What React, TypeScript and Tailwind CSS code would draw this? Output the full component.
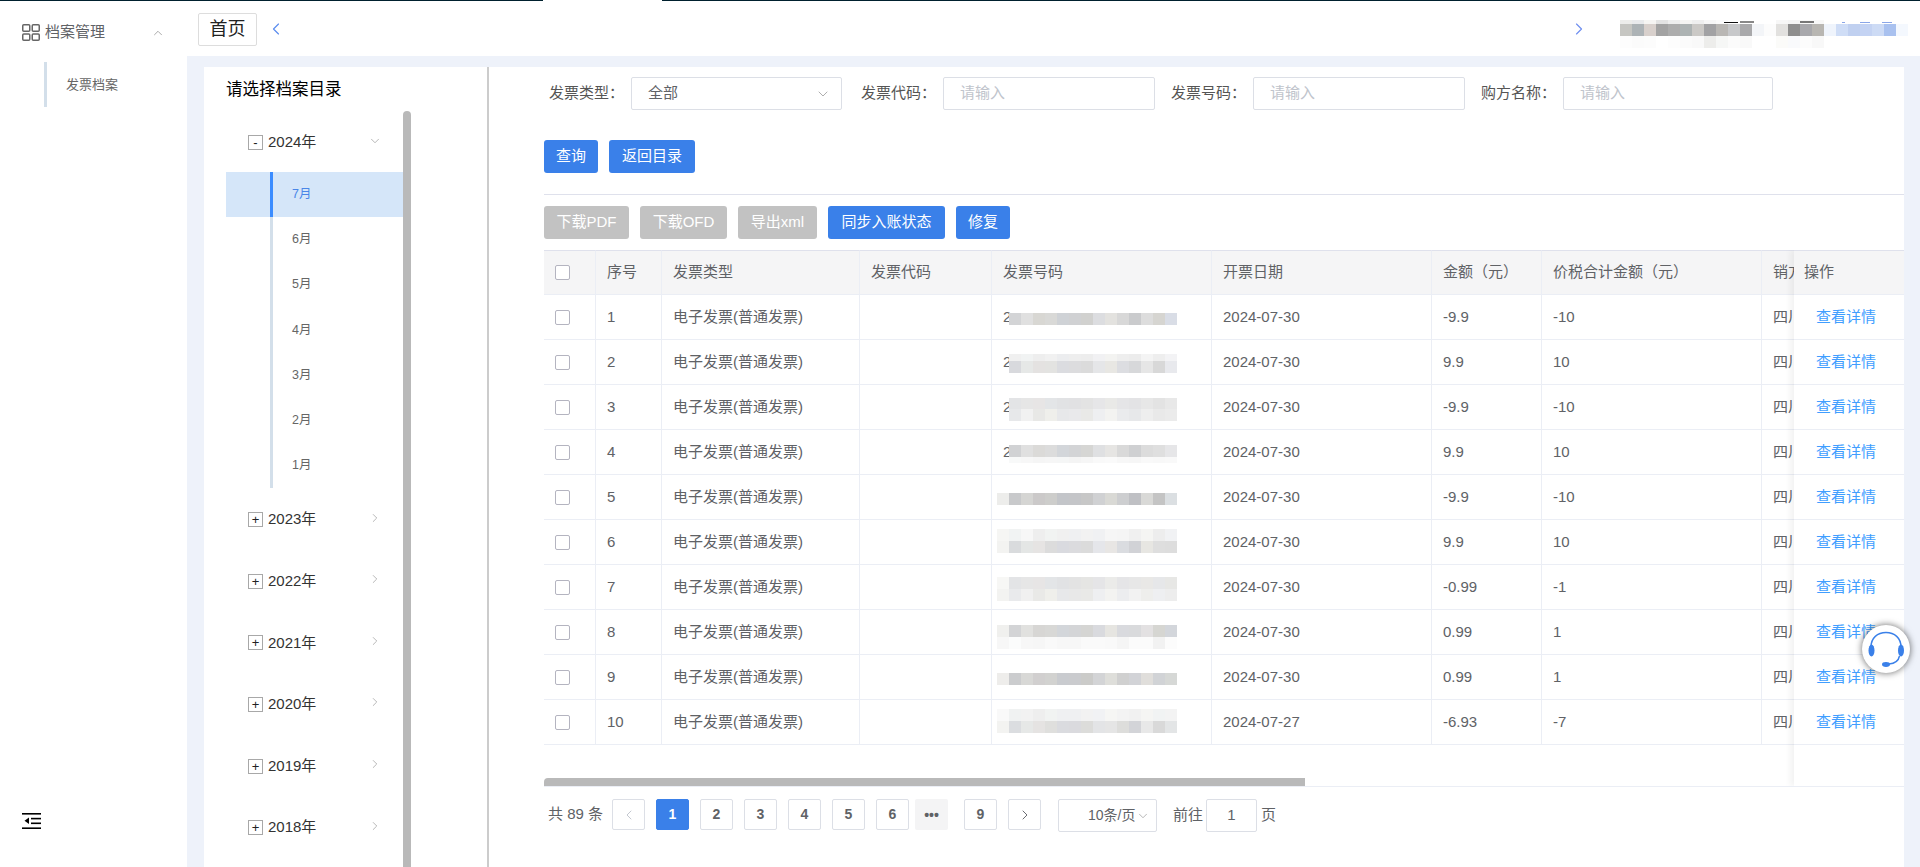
import type { ReactNode } from "react"
import { ChevronDown, ChevronLeft, ChevronRight, ChevronUp } from "lucide-react"

type MosaicRow = [number, string]

// 截图里被打码的区域: 每行 [高度, 颜色列表], 每格 12px 宽
function Mosaic({ rows, className, children }: { rows: MosaicRow[]; className?: string; children?: ReactNode }) {
  const cols = rows[0][1].split(" ").length
  const height = rows.reduce((sum, r) => sum + r[0], 0)
  let y = 0
  return (
    <svg width={cols * 12} height={height} className={className}>
      {rows.map(([h, colors], i) => {
        const top = y
        y += h
        return colors.split(" ").map((c, j) => <rect key={`${i}-${j}`} x={j * 12} y={top} width={12} height={h} fill={`#${c}`} />)
      })}
      {children}
    </svg>
  )
}

const invoiceMosaics: { left: number; top: number; hasDigit: boolean; rows: MosaicRow[] }[] = [
  { left: 17, top: 18, hasDigit: true, rows: [[12, "d3d4d6 e0e0e0 d8d7d3 d9d9d7 cfd2d6 d0d1d3 d1d1cf dcdde0 e3e2df d8d8d8 cacbcd dddddd d6d5d1 d9dde6"]] },
  {
    left: 17,
    top: 14,
    hasDigit: true,
    rows: [
      [7, "f0f0f0 f1f3f3 eeeeee f1f1f1 ecedef eeeeee ededed f1f1f3 f3f3f1 eeeeee ececec f4f4f4 eeeeee f3f3f5"],
      [12, "d8d9dd e6e8e7 e4e2e1 e3e3e1 dbdce0 dcdcde dbdbdb e5e6e8 e8e7e3 dcdde1 d7d8da e6e6e6 d8d8d8 e8e9ed"],
    ],
  },
  {
    left: 17,
    top: 13,
    hasDigit: true,
    rows: [
      [11, "e3e4e6 e6e6e6 e7e5e5 e3e5e7 e1e2e4 e1e1e3 e3e3e3 e6e6e8 e9e9e7 e5e5e7 e3e3e5 e7e7e7 e3e3e3 e8e8e8"],
      [12, "e7e8ea f1f1f1 e8e8e6 efefeb e7e8ea e9e9eb e9e9e7 eeeff1 f3f3f1 eaebed e7e8ea eeeeee e9e9e9 ebebeb"],
    ],
  },
  {
    left: 17,
    top: 15,
    hasDigit: true,
    rows: [
      [12, "d1d2d4 e0e0e0 dbdad8 dcdcdc d3d6da d3d4d6 d6d6d4 dfe0e2 e6e5e3 d9d9d9 cfd0d2 dcdcdc dfdfdf e6e6e8"],
      [6, "f8f9f9 f7f7f7 f5f5f5 f6f6f6 f5f6f6 f4f4f4 f6f6f6 f9f9f9 fafafa f7f7f7 f6f6f6 f9f9f9 f8f8f8 f9f9f9"],
    ],
  },
  { left: 5, top: 18, hasDigit: false, rows: [[12, "ededeb c8c9cb d5d5d3 cbc9c9 cdcdcb c3c5c9 c4c5c8 c7c7c7 d0d1d3 d9d9d5 cdced0 bfc0c4 d9d9d7 c4c4c4 dbdfe2"]] },
  {
    left: 5,
    top: 9,
    hasDigit: false,
    rows: [
      [12, "f6f6f4 f1f3f3 f7f7f7 eeeeee f1f3f2 f0f0f0 eff0f2 f2f2f2 f0f1f3 f6f6f6 f5f5f5 f0f0f0 f5f5f3 ededed f1f2f4"],
      [12, "f3f3f1 d9dbdd e4e6e5 e6e4e3 dcdcdc d9dadf dbdbde dbdbdb e5e6ea e8e6e4 dadce0 d1d2d6 e7e6e2 dedede dddddd"],
    ],
  },
  {
    left: 5,
    top: 12,
    hasDigit: false,
    rows: [
      [12, "f7f7f5 e3e4e6 e6e6e6 e7e5e5 e3e5e7 e1e2e4 e3e3e3 e5e5e3 e5e5e7 ebebe9 e5e5e7 e7e7e7 e9e8e6 e6e7e9 e7e7e5"],
      [12, "f3f3f1 e9eaec f0f0f0 e9e9e7 efefeb e7e8ea e8e8e8 e9e9e7 eeeff1 f3f3f1 ecedef f2f2f2 eeeeec eeeff1 ededed"],
    ],
  },
  {
    left: 5,
    top: 15,
    hasDigit: false,
    rows: [
      [12, "f0f0ee d3d4d6 e1e1df d7d6d4 d8d8d6 d3d6da d4d5d7 d5d5d3 d9dade e6e5e1 d9dade d9dadc e3e1e2 d6d6d2 d3d6db"],
      [12, "f7f7f7 fbfcfc f7f7f7 f6f6f6 f9f9f9 f7f7f7 f7f7f7 fafafa fafafa f9f9f9 f5f5f5 fbfbfb fbfbfb f2f2f2 fcfcfc"],
    ],
  },
  { left: 5, top: 18, hasDigit: false, rows: [[12, "eeedeb cbccce d8d8d6 d1cfcf d2d2d0 c9cbcf cacbce cbcbc9 d3d4d6 dededa d0d0d0 d2d3d7 e0dedb d1d3d6 d6d8d6"]] },
  {
    left: 5,
    top: 9,
    hasDigit: false,
    rows: [
      [12, "f9f9f9 f0f2f2 f2f2f2 eeeeee f1f3f2 eff0f2 eff0f2 f2f2f2 f1f2f4 f6f6f4 f3f3f3 f1f1f1 f5f5f3 f1f3f3 f3f3f3"],
      [12, "f3f3f1 dbdde0 e6e8e7 e5e3e2 dfdfdd dadbdf dadade dcdcda e3e4e6 e5e5e5 dddddb d3d4d8 e8e8e8 d9d9d9 e3e5e6"],
    ],
  },
]

const headerMosaic: MosaicRow[] = [
  [4, "ededeb e9eaec f6f5f3 e3e3e3 eeeeee f5f5f3 efefef f7f7f7 fbfbfb ffffff ffffff ffffff ffffff f7f7f7 f4f4f4 f8f8f8 f8f8f8 ffffff ffffff ffffff ffffff ffffff ffffff ffffff"],
  [12, "c6c6c2 adb3b6 d8d0cc a3a3a3 adadad adb3b3 cbc9c6 a2a2a4 b9b7b4 c7c8ca a9a9ab f3f5f8 fcfcfc e2e1df 8e8e8e a8a8ac b8b6b2 eff4fc cfddf6 c0d0f0 c4d3f3 cddbf5 a9c1ef f4f8fe"],
  [12, "fdfdfd fbfbfb fcfcfc ffffff fdfdfd fbfbfb f9f9f9 ededeb f6f7f6 fbfbfb f9f9f9 ffffff ffffff fbfbf9 f9fafc fcfcfc f8f8f8 ffffff ffffff ffffff ffffff ffffff ffffff ffffff"],
]

const months = ["7月", "6月", "5月", "4月", "3月", "2月", "1月"]
const years = ["2023年", "2022年", "2021年", "2020年", "2019年", "2018年"]

const rows = [
  { no: 1, date: "2024-07-30", amount: "-9.9", total: "-10" },
  { no: 2, date: "2024-07-30", amount: "9.9", total: "10" },
  { no: 3, date: "2024-07-30", amount: "-9.9", total: "-10" },
  { no: 4, date: "2024-07-30", amount: "9.9", total: "10" },
  { no: 5, date: "2024-07-30", amount: "-9.9", total: "-10" },
  { no: 6, date: "2024-07-30", amount: "9.9", total: "10" },
  { no: 7, date: "2024-07-30", amount: "-0.99", total: "-1" },
  { no: 8, date: "2024-07-30", amount: "0.99", total: "1" },
  { no: 9, date: "2024-07-30", amount: "0.99", total: "1" },
  { no: 10, date: "2024-07-27", amount: "-6.93", total: "-7" },
]

function Sidebar() {
  return (
    <aside className="relative w-[187px] shrink-0 bg-white">
      <div className="flex h-[55px] items-center pl-[22px] pt-[8px] text-[15px] text-[#606266]">
        <svg width="18" height="17" viewBox="0 0 18 17" fill="none" stroke="#666" strokeWidth="1.5">
          <rect x="0.75" y="0.75" width="7" height="6.5" rx="1" />
          <rect x="10.25" y="0.75" width="7" height="6.5" rx="1" />
          <rect x="0.75" y="10" width="7" height="6.25" rx="1" />
          <rect x="10.25" y="10" width="7" height="6.25" rx="1" />
        </svg>
        <span className="ml-[5px]">档案管理</span>
        <ChevronUp size={14} strokeWidth={1.4} className="ml-[46px] text-[#999]" />
      </div>
      <div className="ml-[44px] mt-[6px] flex h-[45px] items-center border-l-[3px] border-[#d3dfea] pl-[19px] text-[13px] text-[#666]">发票档案</div>
      <svg width="19" height="16" viewBox="0 0 19 16" className="absolute bottom-[38px] left-[22px]">
        <rect x="0" y="0" width="19" height="1.6" />
        <rect x="9" y="4.8" width="10" height="1.6" />
        <rect x="9" y="9.5" width="10" height="1.6" />
        <rect x="0" y="14.4" width="19" height="1.6" />
        <path d="M7 4.5v6.5L2.5 7.8z" />
      </svg>
    </aside>
  )
}

function Header() {
  return (
    <header className="flex h-[55px] shrink-0 items-center bg-white pl-[11px] pr-[12px]">
      <div className="mt-[1px] flex h-[33px] w-[59px] items-center justify-center rounded-[2px] border border-[#ddd] text-[18px] text-[#222]">首页</div>
      <ChevronLeft size={20} strokeWidth={1.4} className="ml-[9px] mt-[1px] text-[#5b8def]" />
      <ChevronRight size={20} strokeWidth={1.4} className="ml-auto mt-[1px] text-[#6f8ff0]" />
      <Mosaic rows={headerMosaic} className="ml-[31px] mt-[11px]">
        <rect x="104" y="2" width="14" height="1" fill="#111" />
        <rect x="120" y="1" width="14" height="2" fill="#888" />
        <rect x="180" y="1" width="14" height="2" fill="#777" />
        <rect x="222" y="2" width="3" height="1" fill="#8aa6e8" />
        <rect x="240" y="2" width="10" height="1" fill="#8aa6e8" />
        <rect x="262" y="2" width="10" height="1" fill="#8aa6e8" />
      </Mosaic>
    </header>
  )
}

function TreeYear({ label, open }: { label: string; open?: boolean }) {
  return (
    <div className={`flex items-center pl-[22px] pr-[21px] ${open ? "h-[61px] pt-[2px]" : "h-[61.6px]"}`}>
      <span className="flex h-[15px] w-[15px] items-center justify-center border border-[#a8a8a8] text-[13px] leading-none text-[#222]">{open ? "-" : "+"}</span>
      <span className="ml-[5px] text-[15px] text-[#333]">{label}</span>
      {open ? (
        <ChevronDown size={14} strokeWidth={1.2} className="ml-auto -mt-[4px] text-[#999]" />
      ) : (
        <ChevronRight size={14} strokeWidth={1.2} className="ml-auto -mt-[4px] text-[#999]" />
      )}
    </div>
  )
}

function TreePanel() {
  return (
    <section className="flex w-[285px] shrink-0 flex-col overflow-hidden border-r-2 border-[#ccc] bg-white pl-[22px]">
      <h2 className="flex h-[44px] shrink-0 items-center text-[16.5px] text-black">请选择档案目录</h2>
      <div className="flex flex-1 overflow-hidden">
        <div className="w-[177px] shrink-0">
          <TreeYear label="2024年" open />
          {months.map((m, i) => (
            <div key={m} className={`h-[45.14px] pl-[44px] ${i === 0 ? "bg-[#d5e6f9]" : ""}`}>
              <div className={`flex h-full items-center border-l-[3px] pl-[19px] text-[12.5px] ${i === 0 ? "border-[#3b8cff] text-[#4a86e8]" : "border-[#d3dfea] text-[#666]"}`}>{m}</div>
            </div>
          ))}
          <div className="h-px" />
          {years.map((y) => (
            <TreeYear key={y} label={y} />
          ))}
        </div>
        <div className="h-full w-[8px] rounded-t-[4px] bg-[#b9b9b9]" />
      </div>
    </section>
  )
}

function FilterField({ label, width, gap, placeholder }: { label: string; width: number; gap: string; placeholder: string }) {
  return (
    <>
      <span className={`${gap} w-[82px] shrink-0 text-[15px] text-[#555]`}>{label}</span>
      <div className={`flex h-[33px] items-center rounded-[2px] border border-[#dcdfe6] pl-[16px] text-[15px] text-[#c0c4cc] ${width === 212 ? "w-[212px]" : "w-[210px]"}`}>{placeholder}</div>
    </>
  )
}

function Btn({ label, width, gray }: { label: string; width: string; gray?: boolean }) {
  return <button className={`flex h-[33px] items-center justify-center rounded-[3px] text-[15px] text-white ${width} ${gray ? "bg-[#c2c2c2]" : "bg-[#3a80e9]"}`}>{label}</button>
}

function Checkbox() {
  return <span className="block h-[15px] w-[15px] rounded-[2px] border border-[#b4b4c0] bg-white" />
}

const th = "border-r border-[#ebeef5] px-[11px] text-left font-normal"
const td = "border-b border-r border-[#ebeef5] px-[11px]"

const mosaicTop: Record<number, string> = {
  9: "top-[9px]",
  12: "top-[12px]",
  13: "top-[13px]",
  14: "top-[14px]",
  15: "top-[15px]",
  18: "top-[18px]",
}

function InvoiceTable() {
  return (
    <div className="relative h-[537px] overflow-hidden border-b border-[#ebeef5]">
      <table className="w-[1560px] table-fixed border-separate border-spacing-0 text-[15px] text-[#606266]">
        <colgroup>
          <col className="w-[52px]" />
          <col className="w-[66px]" />
          <col className="w-[198px]" />
          <col className="w-[132px]" />
          <col className="w-[220px]" />
          <col className="w-[220px]" />
          <col className="w-[110px]" />
          <col className="w-[220px]" />
          <col className="w-[342px]" />
        </colgroup>
        <thead>
          <tr className="h-[45px] bg-[#f5f5f6]">
            <th className={`${th} border-t border-b border-t-[#dfe1ec] border-b-[#ebeef5]`}>
              <Checkbox />
            </th>
            {["序号", "发票类型", "发票代码", "发票号码", "开票日期", "金额（元）", "价税合计金额（元）", "销方名称"].map((h) => (
              <th key={h} className={`${th} whitespace-nowrap border-t border-b border-t-[#dfe1ec] border-b-[#ebeef5]`}>
                {h}
              </th>
            ))}
          </tr>
        </thead>
        <tbody>
          {rows.map((r, i) => {
            const m = invoiceMosaics[i]
            return (
              <tr key={r.no} className="h-[45px]">
                <td className={td}>
                  <Checkbox />
                </td>
                <td className={td}>{r.no}</td>
                <td className={`${td} whitespace-nowrap`}>电子发票(普通发票)</td>
                <td className={td} />
                <td className={`${td} relative`}>
                  {m.hasDigit ? "2" : ""}
                  <Mosaic rows={m.rows} className={`absolute ${m.left === 17 ? "left-[17px]" : "left-[5px]"} ${mosaicTop[m.top]}`} />
                </td>
                <td className={td}>{r.date}</td>
                <td className={td}>{r.amount}</td>
                <td className={td}>{r.total}</td>
                <td className={`${td} whitespace-nowrap`}>四川省某某科技有限公司</td>
              </tr>
            )
          })}
        </tbody>
      </table>
      <div className="absolute bottom-0 left-0 h-[8px] w-[761px] rounded-tl-[4px] bg-[#b9b9b9]" />
      <div className="absolute bottom-0 right-0 top-0 w-[110px] bg-white text-[15px] shadow-[-4px_0_6px_rgba(0,0,0,0.05)]">
        <div className="flex h-[45px] items-center border-t border-b border-t-[#dfe1ec] border-b-[#ebeef5] bg-[#f5f5f6] pl-[10px] text-[#606266]">操作</div>
        {rows.map((r) => (
          <div key={r.no} className="flex h-[45px] items-center border-b border-[#ebeef5] pl-[22px] text-[#409eff]">
            查看详情
          </div>
        ))}
      </div>
    </div>
  )
}

function PageBtn({ label, active, className }: { label: string; active?: boolean; className?: string }) {
  return (
    <span className={`flex h-[31px] w-[33px] items-center justify-center rounded-[2px] border text-[14px] font-bold ${active ? "border-[#3a80e9] bg-[#3a80e9] text-white" : "border-[#dcdfe6] text-[#606266]"} ${className ?? ""}`}>
      {label}
    </span>
  )
}

function Pagination() {
  return (
    <div className="mt-[12px] flex items-start pl-[4px] text-[15px] text-[#606266]">
      <span className="flex h-[31px] w-[64px] shrink-0 items-center whitespace-nowrap">共 89 条</span>
      <span className="flex h-[31px] w-[33px] items-center justify-center rounded-[2px] border border-[#dcdfe6] text-[#c0c4cc]">
        <ChevronLeft size={16} strokeWidth={1.4} />
      </span>
      <div className="ml-[11px] flex gap-[11px]">
        {["1", "2", "3", "4", "5", "6"].map((p) => (
          <PageBtn key={p} label={p} active={p === "1"} />
        ))}
      </div>
      <span className="ml-[6px] flex h-[31px] w-[33px] items-center justify-center rounded-[2px] bg-[#f4f4f5] text-[14px] font-bold leading-none text-[#606266]">•••</span>
      <PageBtn label="9" className="ml-[16px]" />
      <span className="ml-[11px] flex h-[31px] w-[33px] items-center justify-center rounded-[2px] border border-[#dcdfe6]">
        <ChevronRight size={16} strokeWidth={1.4} />
      </span>
      <div className="ml-[17px] flex h-[33px] w-[99px] items-center rounded-[2px] border border-[#dcdfe6] pl-[29px] text-[14px]">
        <span className="whitespace-nowrap">10条/页</span>
        <ChevronDown size={14} strokeWidth={1.2} className="ml-[1px] text-[#999]" />
      </div>
      <span className="ml-[16px] flex h-[33px] items-center">前往</span>
      <div className="ml-[3px] flex h-[33px] w-[51px] items-center justify-center rounded-[2px] border border-[#dcdfe6]">1</div>
      <span className="ml-[4px] flex h-[33px] items-center">页</span>
    </div>
  )
}

function MainPanel() {
  return (
    <section className="flex-1 overflow-hidden bg-white pl-[55px]">
      <div className="mt-[10px] flex items-center pl-[5px]">
        <span className="w-[82px] shrink-0 text-[15px] text-[#555]">发票类型：</span>
        <div className="flex h-[33px] w-[211px] items-center rounded-[2px] border border-[#dcdfe6] pl-[16px] pr-[10px] text-[15px] text-[#606266]">
          全部
          <ChevronDown size={16} strokeWidth={1.2} className="ml-auto text-[#999]" />
        </div>
        <FilterField label="发票代码：" width={212} gap="ml-[19px]" placeholder="请输入" />
        <FilterField label="发票号码：" width={212} gap="ml-[16px]" placeholder="请输入" />
        <FilterField label="购方名称：" width={210} gap="ml-[16px]" placeholder="请输入" />
      </div>
      <div className="mt-[30px] flex gap-[11px]">
        <Btn label="查询" width="w-[54px]" />
        <Btn label="返回目录" width="w-[86px]" />
      </div>
      <div className="mt-[21px] h-px bg-[#dfe1ec]" />
      <div className="mt-[11px] flex gap-[11px]">
        <Btn label="下载PDF" width="w-[85px]" gray />
        <Btn label="下载OFD" width="w-[87px]" gray />
        <Btn label="导出xml" width="w-[79px]" gray />
        <Btn label="同步入账状态" width="w-[117px]" />
        <Btn label="修复" width="w-[54px]" />
      </div>
      <div className="mt-[11px]">
        <InvoiceTable />
      </div>
      <Pagination />
    </section>
  )
}

function SupportButton() {
  return (
    <div className="absolute left-[1862px] top-[625px] flex h-[48px] w-[48px] items-center justify-center rounded-full bg-white shadow-[0_0_7px_rgba(0,0,0,0.6)]">
      <svg width="48" height="48" viewBox="0 0 48 48" fill="none" stroke="#3a80e9" strokeWidth="1.4">
        <path d="M9 22C9 13 15.5 7.5 24 7.5S39 13 39 22" />
        <ellipse cx="9.5" cy="25.5" rx="3" ry="6" fill="#3a80e9" stroke="none" />
        <ellipse cx="39" cy="25.5" rx="3" ry="6" fill="#3a80e9" stroke="none" />
        <path d="M27 39C33 38.5 36.5 36 37.5 31" />
        <ellipse cx="24" cy="39.5" rx="4" ry="2.4" fill="#3a80e9" stroke="none" />
      </svg>
    </div>
  )
}

export default function App() {
  return (
    <div className="relative flex h-[867px] w-[1920px] flex-col overflow-hidden bg-white font-['Liberation_Sans','Noto_Sans_CJK_SC',sans-serif]">
      <div className="flex h-px shrink-0">
        <div className="w-[543px] bg-[#00202e]" />
        <div className="w-[119px]" />
        <div className="flex-1 bg-[#00202e]" />
      </div>
      <div className="flex min-h-0 flex-1">
        <Sidebar />
        <div className="flex min-w-0 flex-1 flex-col">
          <Header />
          <div className="flex min-h-0 flex-1 bg-[#eef2fa] pl-[17px] pr-[16px] pt-[11px]">
            <TreePanel />
            <MainPanel />
          </div>
        </div>
      </div>
      <SupportButton />
    </div>
  )
}
